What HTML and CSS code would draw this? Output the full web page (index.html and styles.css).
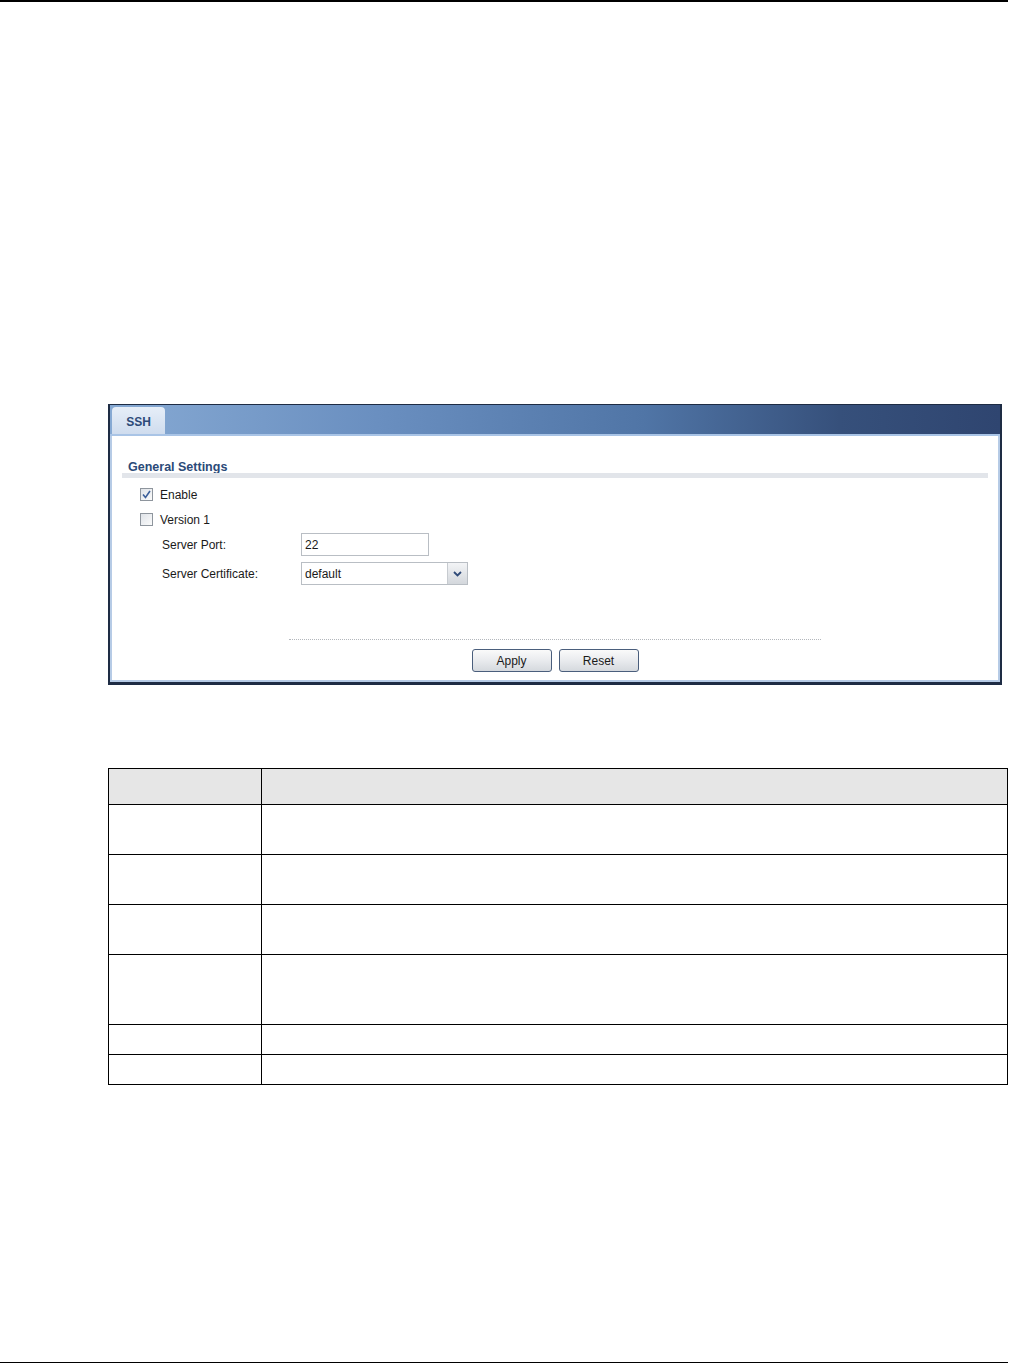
FILE: index.html
```html
<!DOCTYPE html>
<html lang="en">

<head>
    <meta charset="UTF-8">
    <title>SSH</title>
    <link rel="stylesheet" href="styles.css">
</head>

<body>
    <div class="page-rule"></div>

    <div class="panel">
        <div class="panel-head">
            <div class="tab">SSH</div>
        </div>
        <div class="panel-body">
            <div class="section-title">General Settings</div>
            <div class="section-bar"></div>

            <div class="checks">
                <div class="check-row">
                    <span class="checkbox checked">
                        <svg width="9" height="9" viewBox="0 0 9 9"><path d="M1 4.5 L3.5 7.5 L8 1" fill="none" stroke="#3b5f9a" stroke-width="1.6"/></svg>
                    </span>
                    <span>Enable</span>
                </div>
                <div class="check-row">
                    <span class="checkbox"></span>
                    <span>Version 1</span>
                </div>
            </div>

            <div class="fields">
                <div class="field-row">
                    <label class="field-label">Server Port:</label>
                    <div class="text-input">22</div>
                </div>
                <div class="field-row">
                    <label class="field-label">Server Certificate:</label>
                    <div class="select-input">
                        <span class="select-value">default</span>
                        <span class="select-arrow">
                            <svg width="9" height="6" viewBox="0 0 9 6"><path d="M1 1 L4.5 4.5 L8 1" fill="none" stroke="#2f4a78" stroke-width="1.8"/></svg>
                        </span>
                    </div>
                </div>
            </div>

            <div class="button-area">
                <div class="dotted-line"></div>
                <div class="buttons">
                    <button class="btn">Apply</button>
                    <button class="btn">Reset</button>
                </div>
            </div>
        </div>
    </div>

    <table class="desc-table">
        <tr class="head-row"><th class="col-label"></th><th></th></tr>
        <tr class="row-50"><td></td><td></td></tr>
        <tr class="row-50"><td></td><td></td></tr>
        <tr class="row-50"><td></td><td></td></tr>
        <tr class="row-70"><td></td><td></td></tr>
        <tr class="row-30"><td></td><td></td></tr>
        <tr class="row-30"><td></td><td></td></tr>
    </table>

    <div class="page-rule bottom"></div>
</body>

</html>
```

FILE: styles.css
```css
body {
    margin: 0;
    background-color: #ffffff;
    font-family: 'Liberation Sans', Arial, sans-serif;
    font-size: 12px;
    color: #1a1a1a;
}

.page-rule {
    width: 1008px;
    height: 2px;
    background-color: #000000;
}

.page-rule.bottom {
    margin-top: 277px;
}

/* SSH screen */
.panel {
    box-sizing: border-box;
    width: 894px;
    height: 281px;
    margin: 402px 0 0 108px;
    border: 2px solid #1e2c44;
    border-top-width: 1px;
    border-bottom-width: 3px;
    display: flex;
    flex-direction: column;
}

.panel-head {
    height: 31px;
    padding: 4px 0 0 2px;
    box-sizing: border-box;
    display: flex;
    align-items: flex-end;
    background: linear-gradient(to right, #86a9d3 0%, #6a8fc0 30%, #5075a6 60%, #36507b 82%, #2f4570 100%);
    border-bottom: 2px solid #a9c4e6;
}

.tab {
    width: 53px;
    height: 27px;
    box-sizing: border-box;
    background: linear-gradient(to bottom, #e6eef8, #cfdcee);
    border-radius: 4px 4px 0 0;
    color: #2d4a78;
    font-weight: bold;
    font-size: 12px;
    display: flex;
    align-items: center;
    justify-content: center;
    padding-top: 2px;
}

.panel-body {
    flex: 1;
    border-left: 2px solid #b6cbe6;
    border-right: 2px solid #b6cbe6;
    border-bottom: 2px solid #b6cbe6;
    padding: 25px 10px 0 10px;
    display: flex;
    flex-direction: column;
}

.section-title {
    color: #2b4a78;
    font-weight: bold;
    font-size: 12.5px;
    padding-left: 6px;
    line-height: 12px;
}

.section-bar {
    height: 5px;
    background-color: #e2e5ea;
}

.checks {
    margin-top: 4px;
}

.check-row {
    display: flex;
    align-items: center;
    gap: 7px;
    padding-left: 18px;
    height: 25px;
}

.checkbox {
    width: 13px;
    height: 13px;
    box-sizing: border-box;
    border: 1px solid #8e959d;
    background: linear-gradient(to bottom right, #dfe3e8, #fbfbfb);
    display: flex;
    align-items: center;
    justify-content: center;
}

.fields {
    margin-top: -2px;
}

.field-row {
    display: flex;
    align-items: center;
    padding-left: 40px;
    height: 29px;
}

.field-label {
    width: 139px;
}

.text-input {
    width: 128px;
    height: 23px;
    box-sizing: border-box;
    border: 1px solid #b9bec4;
    padding: 4px 0 0 3px;
}

.select-input {
    width: 167px;
    height: 23px;
    box-sizing: border-box;
    border: 1px solid #b9bec4;
    display: flex;
}

.select-value {
    flex: 1;
    padding: 4px 0 0 3px;
}

.select-arrow {
    width: 19px;
    background: linear-gradient(to bottom, #f3f4f6, #d3d7dc);
    border-left: 1px solid #c7cbd0;
    display: flex;
    align-items: center;
    justify-content: center;
}

.button-area {
    margin-top: auto;
    padding-bottom: 8px;
    display: flex;
    flex-direction: column;
    align-items: center;
}

.dotted-line {
    width: 532px;
    border-top: 1px dotted #b3b7bc;
    align-self: flex-start;
    margin-left: 167px;
}

.buttons {
    display: flex;
    gap: 7px;
    margin-top: 9px;
}

.btn {
    width: 80px;
    height: 23px;
    border: 1px solid #4a5e7c;
    border-radius: 3px;
    background: linear-gradient(to bottom, #fafafa 0%, #e9ebee 50%, #d5d9de 100%);
    font-family: 'Liberation Sans', Arial, sans-serif;
    font-size: 12px;
    color: #1a1a1a;
    cursor: pointer;
}

/* description table */
.desc-table {
    margin: 83px 0 0 108px;
    width: 900px;
    border-collapse: collapse;
}

.desc-table th,
.desc-table td {
    border: 1px solid #000000;
    padding: 0;
}

.head-row th {
    height: 35px;
    background-color: #e6e6e6;
}

.col-label {
    width: 152px;
}

.row-50 td {
    height: 49px;
}

.row-70 td {
    height: 69px;
}

.row-30 td {
    height: 29px;
}
```
